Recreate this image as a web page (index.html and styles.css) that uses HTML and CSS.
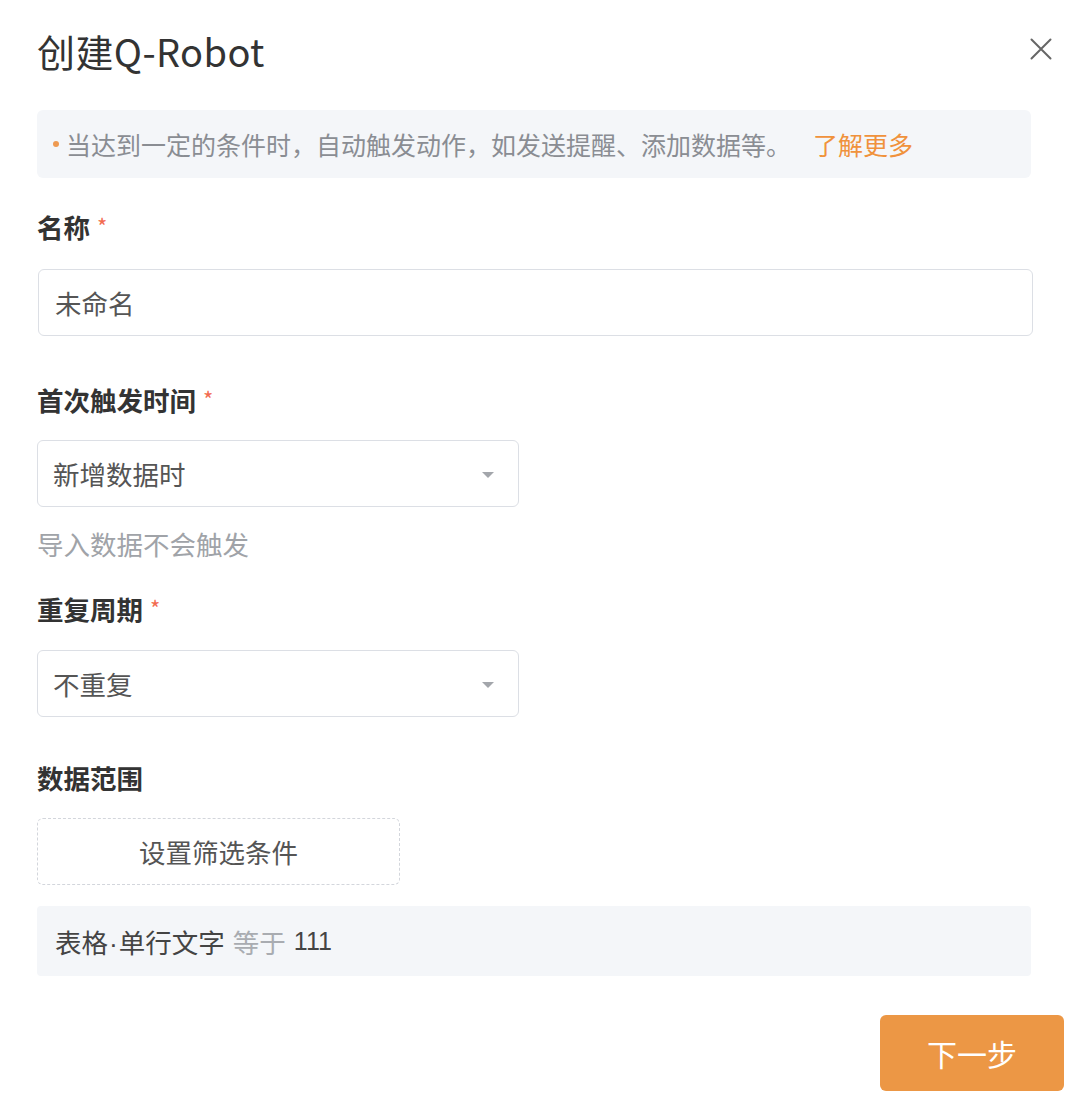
FILE: index.html
```html
<!DOCTYPE html>
<html lang="zh-CN">
	<head>
		<meta charset="utf-8" />
		<title>创建Q-Robot</title>
		<link rel="stylesheet" href="styles.css">
	</head>
	<body>
		<div class="dialog">
			<header class="dialog-head">
				<h1 class="dialog-title">创建Q-Robot</h1>
				<button class="close" type="button" aria-label="关闭">
					<svg width="22" height="22" viewBox="0 0 22 22">
						<path d="M1.5 1.5L20.5 20.5M20.5 1.5L1.5 20.5" stroke="#666" stroke-width="2" stroke-linecap="round" fill="none" />
					</svg>
				</button>
			</header>

			<div class="tip">
				<span class="tip-dot"></span>
				<span class="tip-text">当达到一定的条件时，自动触发动作，如发送提醒、添加数据等。</span>
				<a class="tip-link" href="#">了解更多</a>
			</div>

			<div class="field f-name">
				<div class="label">名称 <span class="req">*</span></div>
				<div class="input input-wide">未命名</div>
			</div>

			<div class="field f-first">
				<div class="label">首次触发时间 <span class="req">*</span></div>
				<div class="input select">
					<span>新增数据时</span>
					<span class="caret"></span>
				</div>
				<div class="hint">导入数据不会触发</div>
			</div>

			<div class="field f-repeat">
				<div class="label">重复周期 <span class="req">*</span></div>
				<div class="input select">
					<span>不重复</span>
					<span class="caret"></span>
				</div>
			</div>

			<div class="field f-range">
				<div class="label">数据范围</div>
				<div class="filter-btn">设置筛选条件</div>
				<div class="cond">
					<span>表格<span class="dot">·</span>单行文字</span>
					<span class="op">等于</span>
					<span class="num">111</span>
				</div>
			</div>

			<footer class="dialog-foot">
				<button class="next" type="button">下一步</button>
			</footer>
		</div>
	</body>
</html>
```

FILE: styles.css
```css
body {
  margin: 0;
  background: #fff;
  font-family: "Noto Sans CJK SC", "Noto Sans", sans-serif;
  color: #333;
}

.dialog {
  width: 1080px;
  height: 1113px;
  box-sizing: border-box;
  padding: 0 16px 0 37px;
}

.dialog-head {
  height: 110px;
  box-sizing: border-box;
  padding-top: 26px;
  display: flex;
  align-items: flex-start;
  justify-content: space-between;
}
.dialog-title {
  margin: 0;
  font-size: 38px;
  line-height: 50px;
  font-weight: 400;
  color: #333;
  letter-spacing: 0.4px;
}
.close {
  margin: 12px 12px 0 0;
  padding: 0;
  border: 0;
  background: none;
  width: 22px;
  height: 22px;
}
.close svg {
  display: block;
}

.tip {
  width: 994px;
  height: 68px;
  box-sizing: border-box;
  padding: 0 16px;
  display: flex;
  align-items: center;
  background: #f4f6f9;
  border-radius: 6px;
  font-size: 25px;
}
.tip-dot {
  width: 6px;
  height: 6px;
  border-radius: 50%;
  background: #ee9a52;
  margin-right: 7px;
}
.tip-text {
  color: #8a8d93;
}
.tip-link {
  margin-left: 22px;
  color: #f0923c;
  text-decoration: none;
}

.f-name {
  margin-top: 31px;
}
.f-first {
  margin-top: 46px;
}
.f-repeat {
  margin-top: 29px;
}
.f-range {
  margin-top: 43px;
}

.label {
  font-size: 26.5px;
  line-height: 36px;
  height: 36px;
  font-weight: 700;
  color: #333;
}
.req {
  position: relative;
  top: -3px;
  color: #f26b4f;
  font-weight: 400;
  font-size: 22px;
  margin-left: 1px;
}

.input {
  height: 67px;
  box-sizing: border-box;
  border: 1.5px solid #dcdfe5;
  border-radius: 6px;
  display: flex;
  align-items: center;
  padding: 0 24px 0 15px;
  font-size: 26.5px;
  color: #555;
  background: #fff;
}
.input-wide {
  margin-top: 24px;
  margin-left: 1px;
  width: 995px;
  padding-left: 16px;
}
.select {
  margin-top: 22px;
  width: 482px;
  justify-content: space-between;
}
.f-repeat .select {
  margin-top: 23px;
}
.caret {
  width: 0;
  height: 0;
  border-left: 6px solid transparent;
  border-right: 6px solid transparent;
  border-top: 6px solid #a3a6ab;
  margin-top: 2px;
}

.hint {
  margin-top: 19px;
  font-size: 26.5px;
  line-height: 36px;
  color: #a0a3a8;
}

.filter-btn {
  margin-top: 22px;
  width: 363px;
  height: 67px;
  box-sizing: border-box;
  border: 1.5px dashed #d3d6dc;
  border-radius: 6px;
  display: flex;
  align-items: center;
  justify-content: center;
  font-size: 26.5px;
  color: #555;
}

.cond {
  margin-top: 21px;
  width: 994px;
  height: 70px;
  box-sizing: border-box;
  padding: 0 18px;
  display: flex;
  align-items: center;
  gap: 8px;
  background: #f4f6f9;
  border-radius: 4px;
  font-size: 26.5px;
  color: #444;
}
.dot {
  font-family: "Liberation Sans", sans-serif;
  margin: 0 1px;
}
.op {
  color: #a9acb1;
}
.num {
  font-family: "Liberation Sans", sans-serif;
  font-size: 25px;
}

.dialog-foot {
  margin-top: 39px;
  display: flex;
  justify-content: flex-end;
}
.next {
  width: 184px;
  height: 76px;
  border: 0;
  border-radius: 6px;
  background: #ec9745;
  color: #fff;
  font-family: "Noto Sans CJK SC", "Noto Sans", sans-serif;
  font-size: 30px;
}
```
